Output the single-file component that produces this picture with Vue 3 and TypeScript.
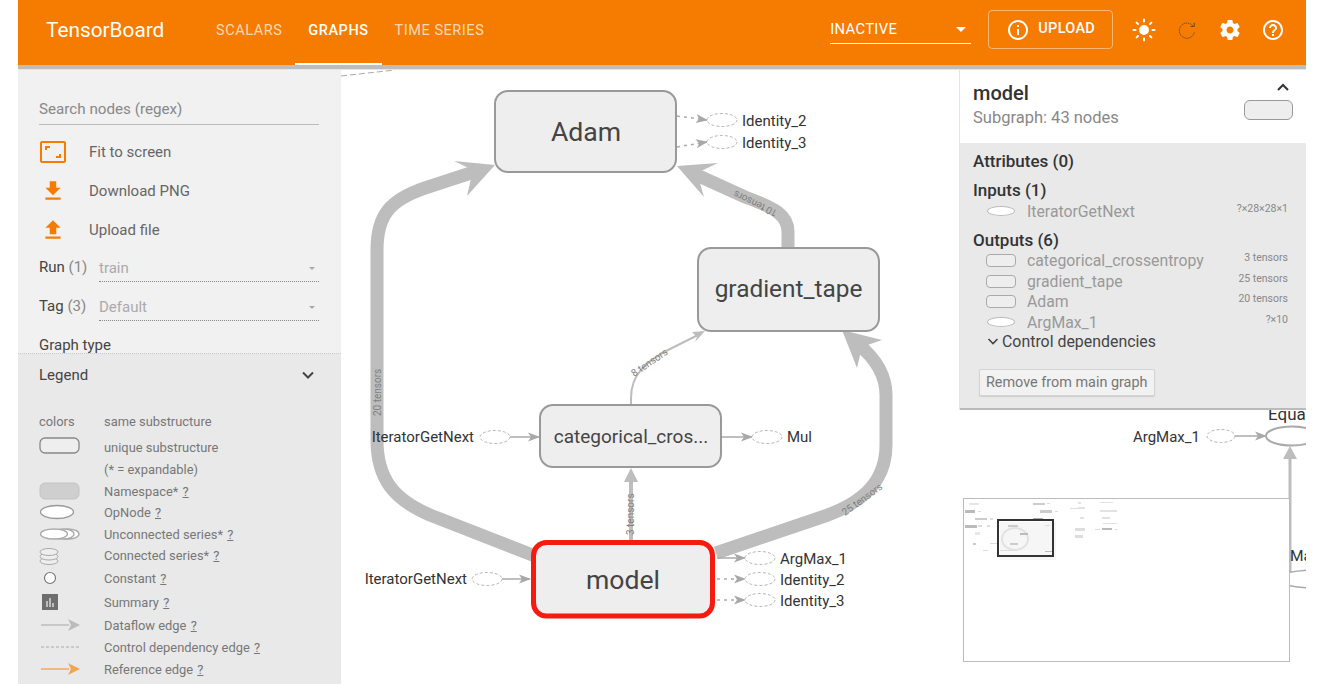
<script setup lang="ts">
const legendRows = [
  { label: 'same substructure', help: false, h: 30 },
  { label: 'unique substructure', help: false, h: 22 },
  { label: '(* = expandable)', help: false, h: 22 },
  { label: 'Namespace*', help: true, h: 22 },
  { label: 'OpNode', help: true, h: 21 },
  { label: 'Unconnected series*', help: true, h: 22 },
  { label: 'Connected series*', help: true, h: 21 },
  { label: 'Constant', help: true, h: 24 },
  { label: 'Summary', help: true, h: 24 },
  { label: 'Dataflow edge', help: true, h: 22 },
  { label: 'Control dependency edge', help: true, h: 22 },
  { label: 'Reference edge', help: true, h: 22 },
]

const outputs = [
  { name: 'categorical_crossentropy', size: '3 tensors', oval: false },
  { name: 'gradient_tape', size: '25 tensors', oval: false },
  { name: 'Adam', size: '20 tensors', oval: false },
  { name: 'ArgMax_1', size: '?×10', oval: true },
]

const stubs = [
  { x: 692, y: 120, label: 'Identity_2', dashed: true, edge: 'M677 116 L707 120' },
  { x: 692, y: 142, label: 'Identity_3', dashed: true, edge: 'M677 147 L707 142' },
  { x: 730, y: 558, label: 'ArgMax_1', dashed: false, edge: 'M717 558 L745 558' },
  { x: 730, y: 579, label: 'Identity_2', dashed: true, edge: 'M717 579 L745 579' },
  { x: 730, y: 600, label: 'Identity_3', dashed: true, edge: 'M717 600 L745 600' },
]

// tiny copies of the graph in the minimap: x, y, w, h, colour
const miniBits: [number, number, number, number, string][] = [
  [5, 4, 10, 2, '#e6e6e6'], [1, 11, 10, 3, '#bbb'], [14, 12, 3, 1, '#ddd'],
  [11, 19, 12, 2, '#ccc'], [26, 19, 3, 2, '#ddd'], [1, 26, 12, 3, '#bbb'],
  [14, 26, 4, 2, '#ddd'], [23, 26, 3, 2, '#ddd'], [69, 4, 12, 2, '#ccc'],
  [83, 4, 3, 1, '#ddd'], [76, 11, 12, 3, '#ccc'], [91, 12, 3, 1, '#ddd'],
  [69, 19, 10, 2, '#aaa'], [106, 9, 10, 1, '#ddd'], [114, 3, 3, 2, '#e2e2e2'],
  [114, 8, 7, 2, '#e2e2e2'], [116, 18, 4, 2, '#e2e2e2'], [111, 29, 10, 3, '#ddd'],
  [111, 36, 8, 3, '#ddd'], [131, 30, 5, 1, '#ddd'], [138, 29, 10, 2, '#bbb'],
  [151, 30, 3, 1, '#ddd'], [136, 3, 13, 1, '#e2e2e2'], [136, 11, 17, 2, '#e2e2e2'],
  [138, 18, 8, 2, '#e2e2e2'], [139, 24, 14, 1, '#e2e2e2'], [44, 26, 10, 2, '#ccc'],
  [56, 34, 8, 2, '#bbb'], [46, 44, 8, 2, '#ccc'], [26, 44, 7, 1, '#ddd'],
  [9, 44, 3, 2, '#ccc'], [36, 51, 17, 1, '#ddd'], [81, 52, 7, 1, '#bbb'],
  [19, 51, 5, 1, '#ddd'], [11, 33, 5, 3, '#e6e6e6'], [81, 26, 5, 1, '#ddd'],
]
</script>

<template>
  <div class="page">
    <header class="topbar">
      <div class="brand">TensorBoard</div>
      <nav class="tabs">
        <span class="tab">SCALARS</span>
        <span class="tab active">GRAPHS</span>
        <span class="tab">TIME SERIES</span>
      </nav>
      <div class="run-select">
        <span>INACTIVE</span>
        <i class="caret"></i>
      </div>
      <button class="upload">
        <svg width="24" height="24" viewBox="0 0 24 24" fill="#fff"><path d="M11 7h2v2h-2zm0 4h2v6h-2zm1-9C6.48 2 2 6.48 2 12s4.48 10 10 10 10-4.48 10-10S17.52 2 12 2zm0 18c-4.41 0-8-3.59-8-8s3.59-8 8-8 8 3.59 8 8-3.59 8-8 8z" /></svg>
        <span>UPLOAD</span>
      </button>
      <div class="actions">
        <svg width="24" height="24" viewBox="0 0 24 24" fill="#fff" stroke="#fff">
          <circle cx="12" cy="12" r="5" stroke="none" />
          <path stroke-width="2" stroke-linecap="round" d="M1.5 12h2M20.5 12h2M12 1.5v2M12 20.5v2M4.6 4.6l1.4 1.4M18 18l1.4 1.4M4.6 19.4L6 18M18 6l1.4-1.4" />
        </svg>
        <svg width="24" height="24" viewBox="0 0 24 24" fill="none" stroke="#5a4630" stroke-width="1">
          <path stroke-dasharray="1.2 0.9" d="M17.5 7.5A7.6 7.6 0 1 0 19.4 14" />
          <path d="M19.2 4.8v3.6h-3.6" />
        </svg>
        <svg width="24" height="24" viewBox="0 0 24 24" fill="#fff"><path d="M19.43 12.98c.04-.32.07-.64.07-.98s-.03-.66-.07-.98l2.11-1.65c.19-.15.24-.42.12-.64l-2-3.46c-.12-.22-.39-.3-.61-.22l-2.49 1c-.52-.4-1.08-.73-1.69-.98l-.38-2.65C14.46 2.18 14.25 2 14 2h-4c-.25 0-.46.18-.49.42l-.38 2.65c-.61.25-1.17.59-1.69.98l-2.49-1c-.23-.09-.49 0-.61.22l-2 3.46c-.13.22-.07.49.12.64l2.11 1.65c-.04.32-.07.65-.07.98s.03.66.07.98l-2.11 1.65c-.19.15-.24.42-.12.64l2 3.46c.12.22.39.3.61.22l2.49-1c.52.4 1.08.73 1.69.98l.38 2.65c.03.24.24.42.49.42h4c.25 0 .46-.18.49-.42l.38-2.65c.61-.25 1.17-.59 1.69-.98l2.49 1c.23.09.49 0 .61-.22l2-3.46c.12-.22.07-.49-.12-.64l-2.11-1.65zM12 15.5c-1.93 0-3.5-1.57-3.5-3.5s1.57-3.5 3.5-3.5 3.5 1.57 3.5 3.5-1.57 3.5-3.5 3.5z" /></svg>
        <svg width="24" height="24" viewBox="0 0 24 24" fill="#fff"><path d="M11 18h2v-2h-2v2zm1-16C6.48 2 2 6.48 2 12s4.48 10 10 10 10-4.48 10-10S17.52 2 12 2zm0 18c-4.41 0-8-3.59-8-8s3.59-8 8-8 8 3.59 8 8-3.59 8-8 8zm0-14c-2.21 0-4 1.79-4 4h2c0-1.1.9-2 2-2s2 .9 2 2c0 2-3 1.75-3 5h2c0-2.25 3-2.5 3-5 0-2.21-1.79-4-4-4z" /></svg>
      </div>
    </header>
    <div class="shadow"></div>

    <main class="body">
      <aside class="sidebar">
        <section class="controls">
          <div class="search">Search nodes (regex)</div>
          <div class="action first">
            <svg width="26" height="26" viewBox="0 0 26 26" fill="none" stroke="#f57c00" stroke-width="2">
              <rect x="1" y="3" width="24" height="20" rx="1" />
              <path d="M6 11V8h4M20 15v3h-4" />
            </svg>
            <span>Fit to screen</span>
          </div>
          <div class="action">
            <svg width="26" height="26" viewBox="0 0 24 24" fill="#f57c00"><path d="M19 9h-4V3H9v6H5l7 7 7-7zM5 18v2h14v-2H5z" /></svg>
            <span>Download PNG</span>
          </div>
          <div class="action">
            <svg width="26" height="26" viewBox="0 0 24 24" fill="#f57c00"><path d="M9 16h6v-6h4l-7-7-7 7h4zm-4 2h14v2H5z" /></svg>
            <span>Upload file</span>
          </div>
          <div class="field first">
            <label>Run <em>(1)</em></label>
            <div class="select"><span>train</span><i></i></div>
          </div>
          <div class="field">
            <label>Tag <em>(3)</em></label>
            <div class="select"><span>Default</span><i></i></div>
          </div>
          <div class="graph-type">Graph type</div>
        </section>

        <section class="legend">
          <div class="legend-head">
            <span>Legend</span>
            <svg width="16" height="16" viewBox="0 0 16 16" fill="none" stroke="#444" stroke-width="2"><path d="M3 5.5l5 5 5-5" /></svg>
          </div>
          <div class="legend-list">
            <div v-for="(row, i) in legendRows" :key="i" class="legend-row" :style="{ height: row.h + 'px' }">
              <div class="swatch">
                <span v-if="i === 0">colors</span>
                <svg v-else-if="i === 1" width="42" height="20" viewBox="0 0 42 20"><rect x="1" y="1" width="39" height="15" rx="5" fill="#eee" stroke="#888" stroke-width="1.3" /></svg>
                <svg v-else-if="i === 3" width="42" height="20" viewBox="0 0 42 20"><rect x="1" y="2" width="39" height="16" rx="5" fill="#cfcfcf" stroke="#c4c4c4" /></svg>
                <svg v-else-if="i === 4" width="42" height="20" viewBox="0 0 42 20"><ellipse cx="18" cy="9" rx="16.5" ry="6.5" fill="#fff" stroke="#999" stroke-width="1.3" /></svg>
                <svg v-else-if="i === 5" width="42" height="20" viewBox="0 0 42 20" fill="#fff" stroke="#aaa" stroke-width="1.3"><ellipse cx="29" cy="10" rx="11" ry="5" /><ellipse cx="24" cy="10" rx="11" ry="5" /><ellipse cx="15" cy="10" rx="13.5" ry="5" /></svg>
                <svg v-else-if="i === 6" width="42" height="20" viewBox="0 0 42 20" fill="#eee" stroke="#aaa"><ellipse cx="10" cy="15" rx="9" ry="3.5" /><ellipse cx="10" cy="10.5" rx="9" ry="3.5" /><ellipse cx="10" cy="6" rx="9" ry="3.5" /></svg>
                <svg v-else-if="i === 7" width="42" height="20" viewBox="0 0 42 20"><circle cx="11" cy="10" r="5.5" fill="#fff" stroke="#777" stroke-width="1.2" /></svg>
                <svg v-else-if="i === 8" width="42" height="20" viewBox="0 0 42 20"><rect x="3" y="2" width="16" height="16" fill="#6e6e6e" /><path d="M8 9v6M11 6v9M14 11v4" stroke="#ddd" stroke-width="1.4" /></svg>
                <svg v-else-if="i === 9" width="42" height="20" viewBox="0 0 42 20"><path d="M2 10h28" stroke="#bbb" stroke-width="1.4" /><path d="M29 4l12 6-12 6 3-6z" fill="#bbb" /></svg>
                <svg v-else-if="i === 10" width="42" height="20" viewBox="0 0 42 20"><path d="M2 10h39" stroke="#aaa" stroke-width="1" stroke-dasharray="3 2" /></svg>
                <svg v-else-if="i === 11" width="42" height="20" viewBox="0 0 42 20"><path d="M2 10h28" stroke="#f5a552" stroke-width="1.4" /><path d="M29 4l12 6-12 6 3-6z" fill="#f5a552" /></svg>
              </div>
              <div class="legend-label">
                {{ row.label }}
                <u v-if="row.help">?</u>
              </div>
            </div>
          </div>
        </section>
      </aside>

      <div class="canvas">
        <svg class="graph" viewBox="341 70 965 614" width="965" height="614">
          <defs>
            <marker id="tip" markerWidth="12" markerHeight="10" refX="11" refY="5" orient="auto" markerUnits="userSpaceOnUse">
              <path d="M0 0.5L12 5L0 9.5L3 5z" fill="#a8a8a8" />
            </marker>
          </defs>

          <!-- edges peeking out from behind the toolbar -->
          <path d="M341 76L395 70" stroke="#aaa" stroke-dasharray="6 3" fill="none" />

          <!-- main edges -->
          <g fill="none" stroke="#bdbdbd">
            <path stroke-width="13" d="M535 556L430 515C395 500 377 480 377 440V250C377 215 390 200 425 188L480 170" />
            <path stroke-width="13" d="M788 248V232C788 215 775 208 745 197L690 172" />
            <path stroke-width="13" d="M716 553L825 516C865 502 886 480 886 445V395C886 375 875 358 858 344" />
            <path stroke-width="4" d="M631 540V478" />
            <path stroke-width="2" d="M631 405V398C631 375 645 362 668 350L698 335" />
          </g>
          <g fill="#bdbdbd">
            <path d="M495 165L454 161L473 170L467 196z" />
            <path d="M677 166L718 163L697 173L704 197z" />
            <path d="M842 330L882 340L862 347L857 368z" />
            <path d="M631 468L624 482H638z" />
            <path d="M705 331L692 332L697 337L695 342z" />
          </g>

          <!-- edge labels -->
          <g class="edge-label">
            <text transform="translate(381 416) rotate(-90)">20 tensors</text>
            <text transform="translate(778 211) rotate(206)">10 tensors</text>
            <text transform="translate(845 516) rotate(-36)">25 tensors</text>
            <text transform="translate(634 535) rotate(-90)">3 tensors</text>
            <text transform="translate(634 377) rotate(-34)">8 tensors</text>
          </g>

          <!-- nodes -->
          <g fill="#eeeeee" stroke="#999" stroke-width="2">
            <rect x="495" y="91" width="181" height="81" rx="13" />
            <rect x="698" y="248" width="181" height="83" rx="13" />
            <rect x="540" y="405" width="181" height="62" rx="13" />
          </g>
          <rect x="533.5" y="542.5" width="179" height="73.5" rx="13" fill="#eeeeee" stroke="#f51b11" stroke-width="5" />

          <g class="node-label">
            <text x="586" y="141" class="adam">Adam</text>
            <text x="788.5" y="297" class="tape">gradient_tape</text>
            <text x="631" y="443" class="small">categorical_cros...</text>
            <text x="623" y="589" class="adam">model</text>
          </g>

          <!-- stub nodes on the right of their parent -->
          <g v-for="s in stubs" :key="s.label + s.y">
            <path :d="s.edge" fill="none" stroke="#aaa" stroke-width="1.5" :stroke-dasharray="s.dashed ? '3 4' : undefined" marker-end="url(#tip)" />
            <ellipse :cx="s.x + 30" :cy="s.y" rx="15" ry="6.5" class="stub" />
            <text :x="s.x + 50" :y="s.y + 5.5" class="stub-label">{{ s.label }}</text>
          </g>

          <!-- input/output stubs around categorical and model -->
          <text x="474" y="442" class="stub-label end">IteratorGetNext</text>
          <ellipse cx="495" cy="437" rx="15" ry="6.5" class="stub" />
          <path d="M510 437H539" stroke="#aaa" stroke-width="1.5" marker-end="url(#tip)" />
          <path d="M722 437H752" stroke="#aaa" stroke-width="1.5" marker-end="url(#tip)" />
          <ellipse cx="767" cy="437" rx="15" ry="6.5" class="stub" />
          <text x="787" y="442" class="stub-label">Mul</text>

          <text x="467" y="584" class="stub-label end">IteratorGetNext</text>
          <ellipse cx="487" cy="579" rx="15" ry="6.5" class="stub" />
          <path d="M502 579H530" stroke="#aaa" stroke-width="1.5" marker-end="url(#tip)" />

          <!-- part of the graph that runs off the right edge -->
          <text x="1268" y="420" class="stub-label big">Equal</text>
          <text x="1200" y="442" class="stub-label end">ArgMax_1</text>
          <ellipse cx="1221" cy="436" rx="14" ry="6.5" class="stub" />
          <path d="M1235 436H1266" stroke="#aaa" stroke-width="1.5" marker-end="url(#tip)" />
          <ellipse cx="1292" cy="436" rx="26" ry="9.5" fill="#fff" stroke="#aaa" stroke-width="2" />
          <path d="M1290 572V458" stroke="#bdbdbd" stroke-width="3" />
          <path d="M1290 446L1283 459H1297z" fill="#bdbdbd" />
          <text x="1290" y="561" class="stub-label mid">Max</text>
          <ellipse cx="1325" cy="579" rx="50" ry="9.5" fill="#fff" stroke="#aaa" stroke-width="1.5" />
        </svg>

        <div class="minimap">
          <svg width="325" height="162" viewBox="0 0 325 162">
            <rect x="36" y="23" width="56" height="38" fill="#f6f6f6" />
            <ellipse cx="51" cy="40" rx="13" ry="11" fill="none" stroke="#e2e2e2" stroke-width="2" />
            <rect v-for="(b, i) in miniBits" :key="i" :x="b[0]" :y="b[1]" :width="b[2]" :height="b[3]" :fill="b[4]" />
            <rect x="34" y="21" width="55" height="36" fill="none" stroke="#333" stroke-width="2" />
          </svg>
        </div>

        <div class="info-card">
          <div class="info-head">
            <div>
              <div class="info-title">model</div>
              <div class="info-sub">Subgraph: 43 nodes</div>
            </div>
            <div class="info-side">
              <svg width="16" height="12" viewBox="0 0 16 12" fill="none" stroke="#333" stroke-width="2"><path d="M3 9l5-5 5 5" /></svg>
              <i class="info-node"></i>
            </div>
          </div>
          <div class="info-body">
            <h4 class="attrs">Attributes (0)</h4>
            <h4>Inputs (1)</h4>
            <div class="io-row last">
              <i class="oval"></i><span class="io-name">IteratorGetNext</span><span class="io-size">?×28×28×1</span>
            </div>
            <h4>Outputs (6)</h4>
            <div v-for="o in outputs" :key="o.name" class="io-row">
              <i :class="o.oval ? 'oval' : 'pill'"></i><span class="io-name">{{ o.name }}</span><span class="io-size">{{ o.size }}</span>
            </div>
            <div class="control-deps">
              <svg width="12" height="10" viewBox="0 0 12 10" fill="none" stroke="#444" stroke-width="1.6"><path d="M1.5 3L6 7.5 10.5 3" /></svg>
              <span>Control dependencies</span>
            </div>
            <button class="remove">Remove from main graph</button>
          </div>
        </div>
      </div>
    </main>
  </div>
</template>

<style>
html, body {
  margin: 0;
  background: #fff;
  overflow: hidden;
}
</style>

<style scoped>
.page {
  width: 1288px;
  height: 684px;
  margin-left: 18px;
  display: flex;
  flex-direction: column;
  overflow: hidden;
  font-family: Roboto, "Liberation Sans", sans-serif;
  color: #444;
}

.topbar {
  height: 65px;
  flex: none;
  background: #f57c00;
  display: flex;
  align-items: center;
  color: #fff;
  padding-left: 28px;
}

.brand {
  font-size: 20.8px;
  width: 157px;
  margin-bottom: 6px;
}

.tabs {
  display: flex;
  height: 100%;
}

.tab {
  font-size: 14.5px;
  letter-spacing: 0.55px;
  color: rgba(255, 255, 255, 0.72);
  padding: 0 13px;
  line-height: 61px;
  box-sizing: border-box;
  height: 100%;
}

.tab.active {
  color: #fff;
  font-weight: 500;
  border-bottom: 2px solid #fff;
}

.run-select {
  width: 141px;
  height: 29px;
  margin-left: 333px;
  margin-bottom: 6px;
  border-bottom: 1.5px solid #fff;
  box-sizing: border-box;
  display: flex;
  align-items: center;
  justify-content: space-between;
  font-size: 14.8px;
  letter-spacing: 0.3px;
  padding-right: 5px;
}

.caret {
  width: 0;
  height: 0;
  border: 5px solid transparent;
  border-top-color: #fff;
  border-bottom: none;
}

.upload {
  width: 125px;
  height: 39px;
  margin-left: 17px;
  margin-bottom: 6px;
  background: transparent;
  border: 1px solid rgba(255, 255, 255, 0.45);
  border-radius: 4px;
  color: #fff;
  display: flex;
  align-items: center;
  gap: 8px;
  padding: 0 0 2px 17px;
  font: 500 14.5px Roboto, sans-serif;
  letter-spacing: 0.3px;
}

.upload svg {
  margin-top: 2px;
}

.actions {
  display: flex;
  margin-left: 19px;
  margin-bottom: 6px;
  gap: 19px;
}

.shadow {
  height: 5px;
  flex: none;
  background: linear-gradient(#bdbdbd 0 4px, #e6e6e6 4px);
}

.body {
  flex: 1;
  display: flex;
  min-height: 0;
}

.sidebar {
  width: 323px;
  flex: none;
  display: flex;
  flex-direction: column;
  background: #f1f1f1;
}

.controls {
  height: 283px;
  flex: none;
  box-sizing: border-box;
  padding: 28px 22px 0 21px;
  overflow: hidden;
}

.search {
  font-size: 15.2px;
  color: #888;
  height: 26px;
  border-bottom: 1.5px solid #bbb;
  line-height: 22px;
}

.action {
  height: 39px;
  display: flex;
  align-items: center;
  font-size: 15px;
  color: #666;
  gap: 23px;
  margin-left: 1px;
}

.action.first {
  margin-top: 7px;
}

.field {
  height: 39px;
  display: flex;
  align-items: flex-start;
  font-size: 15px;
}

.field.first {
  margin-top: 4px;
}

.field label {
  width: 60px;
  flex: none;
  line-height: 22px;
  margin-top: 3px;
}

.field em {
  font-style: normal;
  color: #888;
}

.select {
  flex: 1;
  height: 26px;
  margin-top: 2px;
  border-bottom: 1px dotted #888;
  display: flex;
  align-items: center;
  justify-content: space-between;
  color: #aaa;
  padding-right: 4px;
}

.select i {
  width: 0;
  height: 0;
  border: 3.5px solid transparent;
  border-top-color: #aaa;
  border-bottom: none;
}

.graph-type {
  font-size: 15px;
  line-height: 18px;
  margin-top: 5px;
}

.legend {
  flex: 1;
  background: #e9e9e9;
  border-top: 1px dotted #ccc;
}

.legend-head {
  height: 42px;
  padding: 0 25px 0 21px;
  display: flex;
  align-items: center;
  justify-content: space-between;
  font-size: 15px;
}

.legend-list {
  padding: 10px 0 0 21px;
}

.legend-row {
  display: flex;
  align-items: center;
  font-size: 12.9px;
  color: #777;
}

.swatch {
  width: 65px;
  flex: none;
  height: 20px;
  display: flex;
  align-items: center;
}

.legend-label u {
  margin-left: 1px;
}

.canvas {
  position: relative;
  flex: 1;
  min-width: 0;
  overflow: hidden;
  background: #fff;
}

.graph {
  display: block;
  position: absolute;
  left: 0;
  top: 0;
  font-family: Roboto, "Liberation Sans", sans-serif;
}

.node-label text {
  fill: #444;
  text-anchor: middle;
}

.node-label .adam {
  font-size: 26.6px;
}

.node-label .tape {
  font-size: 24.4px;
}

.node-label .small {
  font-size: 19px;
}

.stub {
  fill: #fff;
  stroke: #b5b5b5;
  stroke-width: 1;
  stroke-dasharray: 3 2;
}

.stub-label {
  font-size: 15px;
  fill: #333;
}

.stub-label.end {
  text-anchor: end;
}

.stub-label.big {
  font-size: 17px;
}

.stub-label.mid {
  font-size: 15.5px;
}

.edge-label text {
  font-size: 10px;
  fill: #808080;
}

.minimap {
  position: absolute;
  left: 622px;
  top: 428px;
  width: 327px;
  height: 164px;
  background: #fff;
  border: 1px solid #bbb;
  box-sizing: border-box;
}

.minimap svg {
  display: block;
}

.info-card {
  position: absolute;
  right: 0;
  top: 0;
  width: 347px;
  height: 340px;
  box-sizing: border-box;
  display: flex;
  flex-direction: column;
  background: #fff;
  border-left: 1px solid #e4e4e4;
}

.info-head {
  height: 73px;
  flex: none;
  display: flex;
  justify-content: space-between;
  padding: 11px 13px 0 13px;
  box-sizing: border-box;
}

.info-title {
  font-size: 20px;
  font-weight: 500;
  color: #333;
  line-height: 24px;
}

.info-sub {
  font-size: 16.5px;
  color: #888;
  line-height: 24px;
  margin-top: 1px;
}

.info-side {
  display: flex;
  flex-direction: column;
  align-items: flex-end;
  gap: 7px;
}

.info-side svg {
  margin-right: 2px;
}

.info-node {
  width: 47px;
  height: 18px;
  border: 1.5px solid #999;
  border-radius: 6px;
  background: #eee;
}

.info-body {
  flex: 1;
  background: #e9e9e9;
  border-bottom: 2px solid #bbb;
  padding: 7px 18px 0 13px;
}

.info-body h4 {
  margin: 0;
  font-size: 17px;
  font-weight: 500;
  color: #333;
  line-height: 22px;
}

.info-body .attrs {
  margin-bottom: 7px;
}

.io-row {
  height: 20.5px;
  display: flex;
  align-items: center;
  padding-left: 13px;
  font-size: 15.8px;
  color: #999;
}

.io-row.last {
  margin-bottom: 7px;
}

.io-name {
  flex: 1;
  margin-left: 11px;
}

.io-size {
  font-size: 10.5px;
  color: #888;
  margin-bottom: 6px;
}

.oval {
  width: 28px;
  height: 10px;
  flex: none;
  margin-left: 1px;
  margin-right: 1px;
  background: #fff;
  border: 1px solid #bbb;
  border-radius: 50%;
  box-sizing: border-box;
}

.pill {
  width: 30px;
  height: 13px;
  flex: none;
  background: #eee;
  border: 1px solid #aaa;
  border-radius: 4px;
  box-sizing: border-box;
}

.control-deps {
  display: flex;
  align-items: center;
  gap: 3px;
  margin-top: -1px;
  padding-left: 14px;
  font-size: 15.9px;
  color: #444;
  height: 19px;
}

.remove {
  display: block;
  margin: 18px 0 0 6px;
  width: 176px;
  height: 27px;
  background: #f2f2f2;
  border: 1px solid #d4d4d4;
  border-radius: 2px;
  box-shadow: 0 1px 1px #ccc;
  padding: 0 6px;
  font: 14.4px Roboto, sans-serif;
  color: #777;
  text-align: left;
}
</style>
